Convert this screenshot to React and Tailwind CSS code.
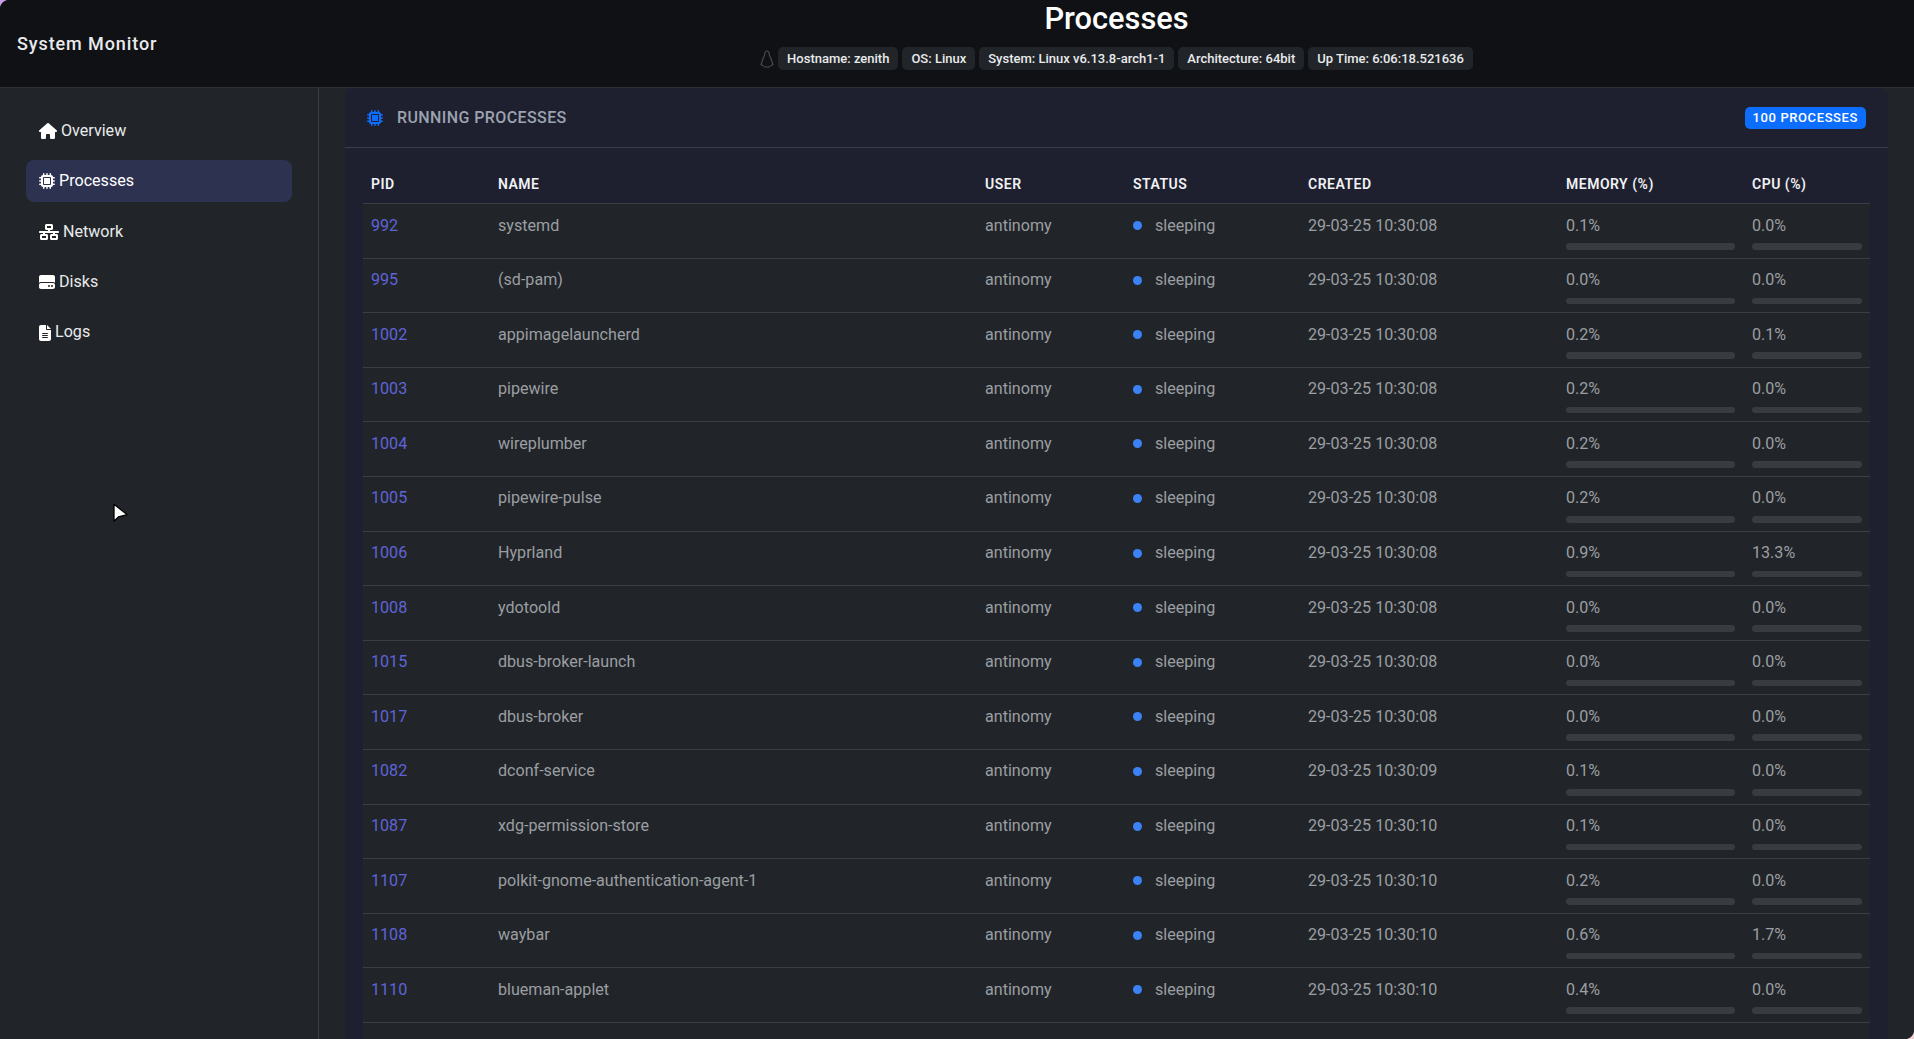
import React from 'react';
import { FaHouse, FaMicrochip, FaNetworkWired, FaHardDrive, FaFileLines } from 'react-icons/fa6';

const navItems = [
  { label: 'Overview', icon: FaHouse, width: 'w-[18px]' },
  { label: 'Processes', icon: FaMicrochip, width: 'w-4', active: true },
  { label: 'Network', icon: FaNetworkWired, width: 'w-5' },
  { label: 'Disks', icon: FaHardDrive, width: 'w-4' },
  { label: 'Logs', icon: FaFileLines, width: 'w-3' },
];

const systemInfo = [
  'Hostname: zenith',
  'OS: Linux',
  'System: Linux v6.13.8-arch1-1',
  'Architecture: 64bit',
  'Up Time: 6:06:18.521636',
];

const processes = [
  [992, 'systemd', '29-03-25 10:30:08', '0.1%', '0.0%'],
  [995, '(sd-pam)', '29-03-25 10:30:08', '0.0%', '0.0%'],
  [1002, 'appimagelauncherd', '29-03-25 10:30:08', '0.2%', '0.1%'],
  [1003, 'pipewire', '29-03-25 10:30:08', '0.2%', '0.0%'],
  [1004, 'wireplumber', '29-03-25 10:30:08', '0.2%', '0.0%'],
  [1005, 'pipewire-pulse', '29-03-25 10:30:08', '0.2%', '0.0%'],
  [1006, 'Hyprland', '29-03-25 10:30:08', '0.9%', '13.3%'],
  [1008, 'ydotoold', '29-03-25 10:30:08', '0.0%', '0.0%'],
  [1015, 'dbus-broker-launch', '29-03-25 10:30:08', '0.0%', '0.0%'],
  [1017, 'dbus-broker', '29-03-25 10:30:08', '0.0%', '0.0%'],
  [1082, 'dconf-service', '29-03-25 10:30:09', '0.1%', '0.0%'],
  [1087, 'xdg-permission-store', '29-03-25 10:30:10', '0.1%', '0.0%'],
  [1107, 'polkit-gnome-authentication-agent-1', '29-03-25 10:30:10', '0.2%', '0.0%'],
  [1108, 'waybar', '29-03-25 10:30:10', '0.6%', '1.7%'],
  [1110, 'blueman-applet', '29-03-25 10:30:10', '0.4%', '0.0%'],
];

const columns = [
  { label: 'PID', width: 'w-[127px]' },
  { label: 'Name', width: 'w-[487px]' },
  { label: 'User', width: 'w-[148px]' },
  { label: 'Status', width: 'w-[175px]' },
  { label: 'Created', width: 'w-[258px]' },
  { label: 'Memory (%)', width: 'w-[186px]' },
  { label: 'CPU (%)', width: 'w-[126px]' },
];

const Usage = ({ value }) => (
  <div>
    <div className="leading-6">{value}</div>
    <div className="mt-[5.5px] h-[6.6px] rounded-full bg-[#383b40]" />
  </div>
);

const App = () => {
  return (
    <div className="relative flex h-screen flex-col overflow-hidden bg-[#212529] font-['Roboto',sans-serif] text-[16.1px] text-[#9b9ea2]">
      <header className="flex h-[87px] shrink-0 items-center bg-[#0f1115]">
        <div className="w-[319px] pb-[1px] pl-[17px] text-[18px] font-medium tracking-[0.9px] text-[#e9eaec]">
          System Monitor
        </div>
        <div className="flex flex-1 flex-col items-center self-start">
          <h1 className="text-[30.8px] leading-[38px] font-medium text-white">Processes</h1>
          <div className="mt-[9px] flex items-center gap-1">
            {/* dim tux outline, same colour as the header so only the edge shows */}
            <svg className="h-[18px] w-[14px]" viewBox="0 0 14 18" fill="none">
              <path d="M7 1c1.6 0 2.2 1.4 2.2 3 0 2 1.5 3.5 2.3 6 .5 1.6.8 3 1.5 4.5-1.4.9-3 1.5-4 2.5H5c-1-1-2.6-1.6-4-2.5C1.7 13 2 11.6 2.5 10c.8-2.5 2.3-4 2.3-6 0-1.6.6-3 2.2-3z" stroke="#4a4d52" strokeWidth="1.1" />
            </svg>
            {systemInfo.map((item) => (
              <span key={item} className="flex h-[23px] items-center rounded-[5px] bg-[#212529] px-[9px] text-[13px] font-medium text-[#e9eaec]">
                {item}
              </span>
            ))}
          </div>
        </div>
      </header>

      <div className="flex min-h-0 flex-1 border-t border-[#2c2f33]">
        <aside className="w-[319px] shrink-0 border-r border-[#3a3d42] px-[26px] pt-[22px]">
          <nav className="flex flex-col gap-[8.4px]">
            {navItems.map(({ label, icon: Icon, width, active }) => (
              <a
                key={label}
                href="#"
                className={`flex h-[42px] items-center gap-1 rounded-lg px-[13px] ${active ? 'bg-[#2d3250] text-white' : 'text-[#e9eaec]'}`}
              >
                <Icon className={`h-4 ${width} text-white`} />
                {label}
              </a>
            ))}
          </nav>
        </aside>

        <main className="min-w-0 flex-1 px-[26px]">
          <section className="rounded-t-lg bg-[#1e2030]">
            <div className="flex h-[60px] items-center justify-between border-b border-[#3a3d4c] px-[22px]">
              <h2 className="flex items-center gap-[14px] text-base font-medium tracking-[0.4px] text-[#9ca3af] uppercase">
                <FaMicrochip className="h-4 w-4 text-[#0d6efd]" />
                Running Processes
              </h2>
              <span className="flex h-[22px] items-center rounded-[5px] bg-[#0d6efd] px-2 text-[13px] font-medium tracking-[0.6px] text-white uppercase">
                100 Processes
              </span>
            </div>

            <div className="px-[18px] pt-[19px]">
              <table className="w-full table-fixed border-collapse text-left">
                <thead>
                  <tr className="border-b border-[#3a3d42]">
                    {columns.map((col) => (
                      <th key={col.label} className={`${col.width} px-2 pt-[7px] pb-[9px] text-sm leading-5 font-semibold tracking-[0.5px] text-[#f1f2f3] uppercase`}>
                        {col.label}
                      </th>
                    ))}
                  </tr>
                </thead>
                <tbody>
                  {processes.map(([pid, name, created, mem, cpu]) => (
                    <tr key={pid} className="border-b border-[#3a3d42] bg-[#212529] align-top">
                      <td className="px-2 pt-[9.5px] leading-6 text-[#5f63d8]">{pid}</td>
                      <td className="px-2 pt-[9.5px] leading-6">{name}</td>
                      <td className="px-2 pt-[9.5px] leading-6">antinomy</td>
                      <td className="px-2 pt-[9.5px] leading-6">
                        <span className="flex items-center gap-[13px]">
                          <span className="h-[9px] w-[9px] rounded-full bg-[#3b82f6]" />
                          sleeping
                        </span>
                      </td>
                      <td className="px-2 pt-[9.5px] leading-6">{created}</td>
                      <td className="pt-[9.5px] pr-[9px] pb-2 pl-2"><Usage value={mem} /></td>
                      <td className="px-2 pt-[9.5px] pb-2"><Usage value={cpu} /></td>
                    </tr>
                  ))}
                  <tr className="h-[54px] bg-[#212529]"><td colSpan={7} /></tr>
                </tbody>
              </table>
            </div>
          </section>
        </main>
      </div>

      {/* mouse pointer caught in the screenshot */}
      <svg className="absolute top-[503px] left-[113px] h-[20px] w-[16px]" viewBox="0 0 16 20">
        <path d="M1 1.2v17l4.6-4.4 8.4-2.2z" fill="#fff" stroke="#000" strokeWidth="1.3" strokeLinejoin="round" />
      </svg>

      {/* window border showing at the rounded corners */}
      <svg className="absolute top-0 left-0 h-2 w-2" viewBox="0 0 8 8">
        <path d="M0 7C1 3.5 3.5 1 7 0H0z" fill="#c9a0e8" />
      </svg>
      <svg className="absolute right-0 bottom-0 h-2 w-2" viewBox="0 0 8 8">
        <path d="M8 1C7 4.5 4.5 7 1 8h7z" fill="#f0d0d0" />
      </svg>
    </div>
  );
};

export default App;
